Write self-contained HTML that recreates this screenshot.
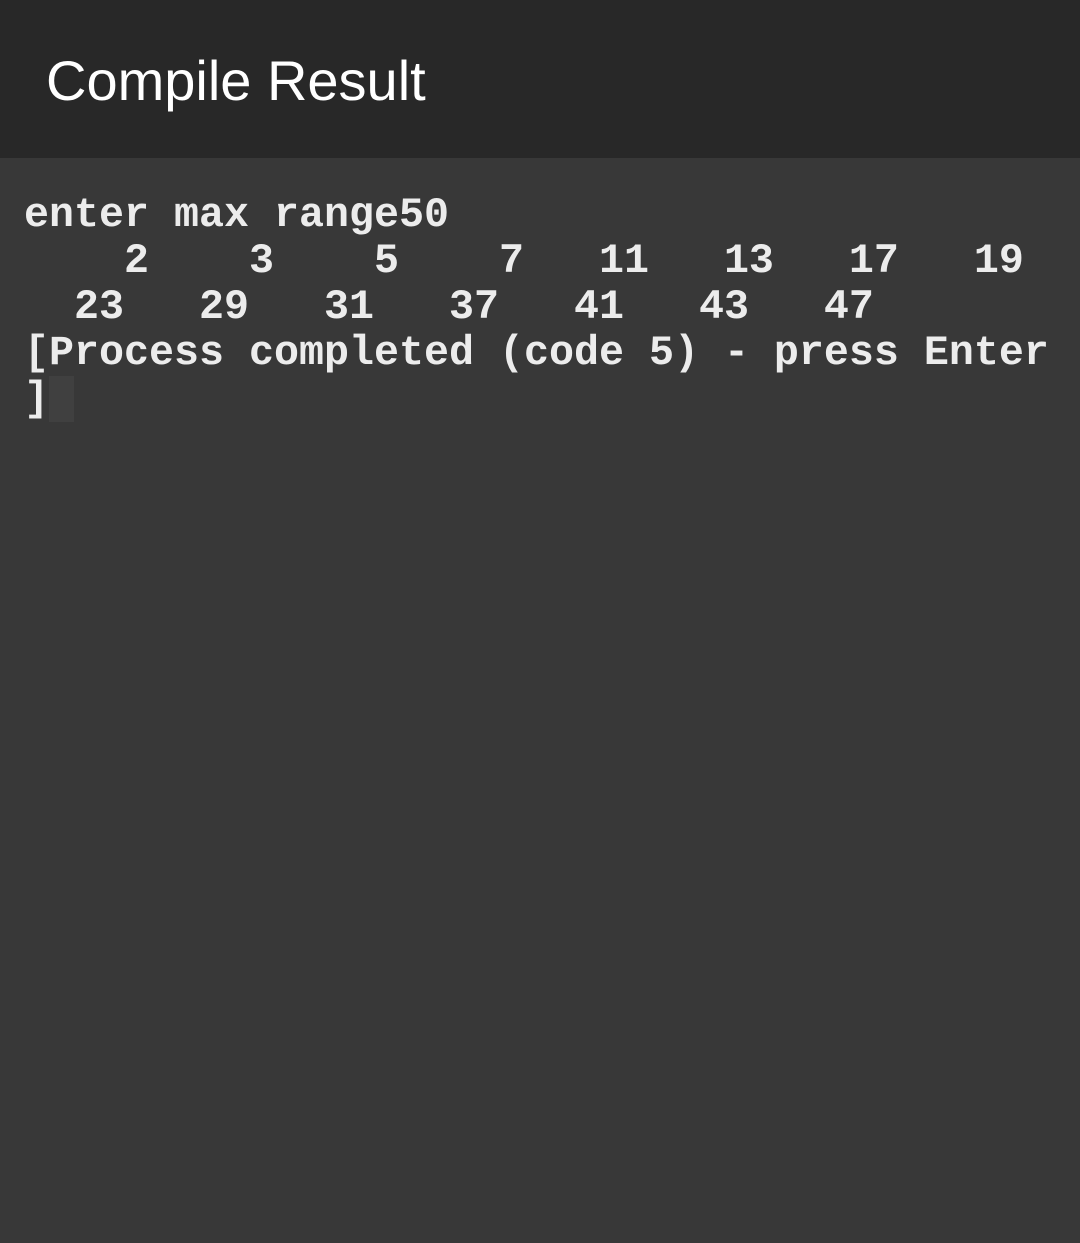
<!DOCTYPE html>
<html><head><meta charset="utf-8"><style>
html,body{margin:0;padding:0;width:1080px;height:1243px;background:#383838;overflow:hidden}
.hdr{height:158px;background:#282828;position:relative}
.hdr span{position:absolute;left:46px;top:48px;font-family:"Liberation Sans",sans-serif;font-size:56px;color:#fff;line-height:66px}
pre{margin:0;position:absolute;left:24px;top:192px;font-family:"Liberation Mono",monospace;font-weight:bold;font-size:41.67px;line-height:46px;color:#ececec}
.cur{display:inline-block;width:25px;height:46px;background:#404040;vertical-align:top}
</style></head><body>
<div class="hdr"><span>Compile Result</span></div>
<pre>enter max range50
    2    3    5    7   11   13   17   19
  23   29   31   37   41   43   47
[Process completed (code 5) - press Enter
]<span class="cur"></span></pre>
</body></html>
